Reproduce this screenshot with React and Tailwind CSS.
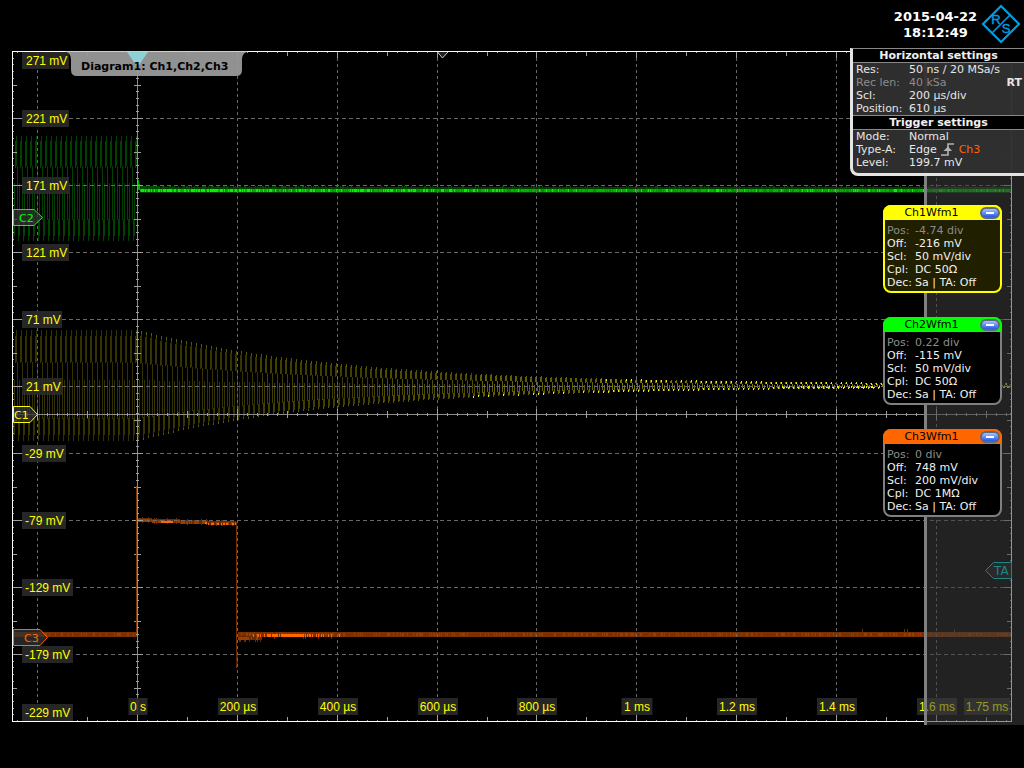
import React from "react";

/* ---------- waveform data ---------- */

const noise = (n) => {
  const v = Math.sin(n * 127.1 + 11.7) * 43758.5453;
  return v - Math.floor(v);
};

const col = (x, top, bottom) =>
  `M${x} ${top.toFixed(1)}h1V${bottom.toFixed(1)}h-1z`;

// Vertical extent of each of the five pixel columns in one carrier period.
const EXTENTS = [
  [0.9, 0.4],
  [1, 0.42],
  [0.42, -0.6],
  [-0.58, -1],
  [0.1, -0.9],
];

function carrier(from, to, mid, amp) {
  let d = "";
  for (let x = from; x < to; x++) {
    const [hi, lo] = EXTENTS[x % 5];
    const a = amp(x);
    d += col(x, mid - hi * a, Math.max(mid - lo * a, mid - hi * a + 1));
  }
  return d;
}

const decay = (x) => (x < 138 ? 55.5 : 54 * Math.exp(-(x - 138) / 205) + 1.5);

const ch1Segments = [
  [13, 138, "#343200"],
  [138, 260, "#363400"],
  [260, 380, "#423f00"],
  [380, 480, "#504c00"],
  [480, 600, "#645f00"],
  [600, 740, "#7a7500"],
  [740, 1011, "#858000"],
].map(([a, b, color]) => ({ color, d: carrier(a, b, 385.5, decay) }));

const ch1Tips = (() => {
  let dim = "";
  let bright = "";
  for (let x = 140; x < 1011; x++) {
    const a = decay(x);
    const k = x % 5;
    if (x < 470) {
      if (k === 1) dim += col(x, 385.5 - a, 388.5 - a);
      if (k === 3) dim += col(x, 383.5 + a, 385.5 + a);
    } else {
      const chance = (x - 440) / 330;
      if (k === 3 && noise(x) < chance + 0.2) bright += col(x, 383.5 + a, 385.5 + a);
      if (x > 600 && k === 1 && noise(x) < chance) bright += col(x, 385.5 - a, 387.5 - a);
      if (x > 780 && k !== 0 && noise(x * 3) < 0.6) bright += col(x, 386, 388);
    }
  }
  return { dim, bright };
})();

const ch2Burst = carrier(13, 137, 188.5, () => 52.5);

const ch2Trace = (() => {
  let shadow = "";
  let mid = "";
  let bright = "";
  for (let x = 140; x < 1011; x++) {
    if (noise(x) < (x < 160 ? 0.9 : x < 330 ? 0.4 : 0.15)) shadow += col(x, 186, 189);
    const p = x < 260 ? 0.65 : x < 500 ? 0.4 : 0.12;
    if (noise(x * 2) < p) bright += col(x, 189, 192);
    else if (noise(x * 5) < 0.6) mid += col(x, 189, 192);
  }
  return { shadow, mid, bright };
})();

const ch3Trace = (() => {
  let dark = "";
  let mid = "";
  let bright = "";
  for (let x = 138; x < 237; x++) {
    const y = 518 + Math.round((x - 138) / 28);
    dark += col(x, y, y + 4);
    if (x < 150 || noise(x) < 0.7) mid += col(x, y + 1, y + 4);
    if ((x > 160 && x < 173) || (x > 204 && noise(x) < 0.5)) bright += col(x, y + 2, y + 4);
    if (noise(x * 7) < 0.15) dark += col(x, y - 1, y + 5);
  }
  for (let x = 238; x < 262; x++) {
    dark += col(x, 635, noise(x) < 0.4 ? 642 : 640);
    if (noise(x * 2) < (x < 248 ? 1 : 0.4)) mid += col(x, 637, 640);
  }
  for (let x = 250; x < 340; x++) {
    if (noise(x * 3) < (x > 266 && x < 306 ? 0.95 : 0.4)) bright += col(x, 634, 637);
    if (noise(x * 11) < 0.15) dark += col(x, 632, 639);
  }
  for (let x = 14; x < 1011; x++) {
    if (x > 136 && x < 238) continue;
    if (noise(x * 13) < 0.35) mid += col(x, 633, 636);
  }
  [862, 904, 907, 954].forEach((x) => (dark += col(x, 629, 633)));
  return { dark, mid, bright };
})();

/* ---------- grid ---------- */

const GRID_X = [37, 137, 237, 337, 437, 536, 636, 736, 836, 936];
const GRID_Y = [118, 185, 252, 319, 386, 453, 520, 587, 654];

const hTicks = (() => {
  let d = "";
  for (let i = 0; i < 100; i++) {
    const x = Math.round(17 + i * 9.99) + 0.5;
    const n = i - 2;
    const size = n % 10 === 0 ? 6 : n % 5 === 0 ? 4 : 1;
    const half = n % 10 === 0 ? 5 : n % 5 === 0 ? 3 : 1;
    d += `M${x} ${721 - size}V721M${x} 52V${52 + size}M${x} ${414 - half}V${415 + half}`;
  }
  return d;
})();

const vTicks = (() => {
  let d = "";
  for (let i = -9; i < 90; i++) {
    const y = Math.round(118 + i * 6.7) + 0.5;
    if (y < 53 || y > 720) continue;
    const size = i % 10 === 0 ? 9 : i % 5 === 0 ? 4 : 1;
    const half = i % 10 === 0 ? 5 : i % 5 === 0 ? 3 : 1;
    d += `M13 ${y}H${13 + size}M1011 ${y}H${1011 - Math.min(size, 7)}M${137 - half} ${y}H${138 + half}`;
  }
  return d;
})();

const Y_LABELS = [
  ["271 mV", 52, 47],
  ["221 mV", 110, 47],
  ["171 mV", 177, 47],
  ["121 mV", 244, 47],
  ["71 mV", 311, 40],
  ["21 mV", 378, 40],
  ["-29 mV", 445, 44],
  ["-79 mV", 512, 44],
  ["-129 mV", 579, 51],
  ["-179 mV", 646, 51],
  ["-229 mV", 704, 51],
];

const X_LABELS = [
  ["0 s", 138, 19],
  ["200 µs", 238, 40],
  ["400 µs", 338, 40],
  ["600 µs", 438, 40],
  ["800 µs", 537, 40],
  ["1 ms", 637, 31],
  ["1.2 ms", 737, 40],
  ["1.4 ms", 837, 40],
  ["1.6 ms", 937, 40],
  ["1.75 ms", 987, 46],
];

function Tag({ label, y, body, tip, textX, color }) {
  const points = `13.5,${y - 8} ${body},${y - 8} ${tip},${y} ${body},${y + 8} 13.5,${y + 8}`;
  return (
    <g>
      <polygon points={points} fill="#333333" fillOpacity="0.75" stroke={color} />
      <text x={textX} y={y + 4} fontSize="11" fill={color} className="font-['DejaVu_Sans',sans-serif]">
        {label}
      </text>
    </g>
  );
}

function Plot() {
  return (
    <svg
      viewBox="0 48 1024 677"
      className="block h-auto w-full font-['Liberation_Sans',Arial,sans-serif]"
      role="img"
      aria-label="Oscilloscope diagram"
    >
      <g shapeRendering="crispEdges">
        <path d={ch2Burst} fill="#004200" />
        {ch1Segments.map((s) => (
          <path key={s.color} d={s.d} fill={s.color} />
        ))}
        <path d={ch1Tips.dim} fill="#5c5800" />
        <path d={ch1Tips.bright} fill="#eeee00" />

        <path d="M137 180h2v4h1v3h1v3h-4z" fill="#00b000" />
        <rect x="140" y="187" width="871" height="6" fill="#003c00" />
        <rect x="140" y="189" width="871" height="3" fill="#009600" />
        <path d={ch2Trace.shadow} fill="#004a00" />
        <path d={ch2Trace.mid} fill="#00b400" />
        <path d={ch2Trace.bright} fill="#00f400" />

        <rect x="13" y="632" width="124" height="5" fill="#7a3000" />
        <rect x="238" y="632" width="773" height="5" fill="#7a3000" />
        <path d={ch3Trace.dark} fill="#6a2a00" />
        <path d={ch3Trace.mid} fill="#9a3e00" />
        <path d={ch3Trace.bright} fill="#ff6600" />
        <rect x="236" y="522" width="1" height="146" fill="#7a3000" />
        <rect x="236" y="652" width="2" height="14" fill="#5a2400" />
      </g>

      <g shapeRendering="crispEdges" fill="none">
        {GRID_X.filter((x) => x !== 137).map((x) => (
          <path key={x} d={`M${x + 0.5} 52V721`} stroke="#686868" strokeDasharray="3 3" />
        ))}
        {GRID_Y.map((y) => (
          <path key={y} d={`M13 ${y + 0.5}H1011`} stroke="#686868" strokeDasharray="4 3" />
        ))}
        <path d="M137.5 52V721M13 414.5H1011" stroke="#8c8c8c" />
        <path d={hTicks} stroke="#a0a0a0" />
        <path d={vTicks} stroke="#a0a0a0" />
        <path d="M136.5 486V634" stroke="#803400" />
        <path d="M12.5 51.5H1011.5V721.5H12.5Z" stroke="#ffffff" />
      </g>

      <path d="M437.5 52L442.5 58L448 52" fill="#555555" fillOpacity="0.4" stroke="#cccccc" />

      <g fontSize="12">
        {Y_LABELS.map(([text, y, w]) => (
          <g key={text}>
            <rect x="22" y={y} width={w} height="17" fill="#2a2a2a" fillOpacity="0.9" />
            <text x={text[0] === "-" ? 25 : 26} y={y + 13} fill="#ffff00">
              {text}
            </text>
          </g>
        ))}
        {X_LABELS.map(([text, x, w]) => (
          <g key={text}>
            <rect x={x - w / 2} y="698" width={w} height="17" fill="#2a2a2a" fillOpacity="0.9" />
            <text x={x} y="711" textAnchor="middle" fill="#ffff00">
              {text}
            </text>
          </g>
        ))}
      </g>

      <Tag label="C2" y={217.5} body={34} tip={42.5} textX={19} color="#00ff00" />
      <Tag label="C1" y={414.5} body={30} tip={37.5} textX={14} color="#ffff00" />
      <Tag label="C3" y={637.5} body={40} tip={47.5} textX={24} color="#ff6600" />

      <path
        d="M64 51.5C69 52 71 55 71 60V70Q71 76 77 76H236Q242 76 242 70V60C242 55 244 52 250 51.5Z"
        fill="#999999"
        fillOpacity="0.95"
      />
      <path d="M127 52H148L139 65H136Z" fill="#8fd0d4" />
      <text x="81" y="70" fontSize="11" fontWeight="bold" fill="#000000" className="font-['DejaVu_Sans',sans-serif]">
        Diagram1: Ch1,Ch2,Ch3
      </text>

      <rect x="927" y="48" width="97" height="677" fill="#3e3e3e" fillOpacity="0.55" />
      <rect x="924" y="48" width="3" height="677" fill="#808080" />
      <path d="M1011.5 562.5H993.5L985.5 570.5L993.5 578.5H1011.5Z" fill="#2a2a2a" stroke="#1f8484" />
      <text x="994" y="575" fontSize="12" fill="#1f8484" className="font-['DejaVu_Sans',sans-serif]">
        TA
      </text>
    </svg>
  );
}

function Logo() {
  return (
    <svg viewBox="0 0 40 40" className="size-10 shrink-0" role="img" aria-label="R&S">
      <g fill="none" stroke="#009ee3" strokeWidth="2.2">
        <path d="M20 2L38 20L20 38L2 20Z" />
        <path d="M10.5 29.5L29.5 10.5" strokeWidth="1.6" />
      </g>
      <g fill="#009ee3" fontSize="13" textAnchor="middle" className="font-['Liberation_Sans',Arial,sans-serif]">
        <text x="15" y="20" stroke="#009ee3" strokeWidth="0.4">R</text>
        <text x="25" y="29" stroke="#009ee3" strokeWidth="0.4">S</text>
      </g>
    </svg>
  );
}

function EdgeIcon() {
  return (
    <svg viewBox="0 0 14 13" className="h-[13px] w-[14px]" aria-label="rising edge">
      <path d="M0 12H7V1H13" fill="none" stroke="#b4b4b4" strokeWidth="1.6" />
      <path d="M2.5 8L7 3.5L11 8Z" fill="#b4b4b4" />
    </svg>
  );
}

function Heading({ children }) {
  return (
    <h2 className="h-[14px] border-b border-[#888888] bg-black text-center text-[11px] leading-[14px] font-bold text-[#f0f0f0]">
      {children}
    </h2>
  );
}

function Rows({ rows, className }) {
  return (
    <dl className={className}>
      {rows.map(([k, v, dim]) => (
        <React.Fragment key={k}>
          <dt className={dim ? "text-[#8c8c8c]" : undefined}>{k}</dt>
          <dd className={dim ? "text-[#8c8c8c]" : undefined}>{v}</dd>
        </React.Fragment>
      ))}
    </dl>
  );
}

const SETTINGS_GRID =
  "grid grid-cols-[53px_1fr] pl-[3px] text-[11px] leading-[13px] whitespace-nowrap text-[#e6e6e6]";

function SettingsPanel() {
  return (
    <section className="absolute top-12 right-0 w-[174px] overflow-hidden rounded-bl-lg border-t border-b-3 border-l-3 border-t-[#888888] border-b-[#e4e4e4] border-l-[#e4e4e4] bg-[#303030]/95 pb-1">
      <Heading>Horizontal settings</Heading>
      <div className="relative border-b border-[#888888]">
        <Rows
          className={SETTINGS_GRID}
          rows={[
            ["Res:", "50 ns / 20 MSa/s"],
            ["Rec len:", "40 kSa", true],
            ["Scl:", "200 µs/div"],
            ["Position:", "610 µs"],
          ]}
        />
        <span className="absolute top-[13px] right-[2px] text-[11px] leading-[13px] font-bold text-[#e6e6e6]">RT</span>
      </div>
      <Heading>Trigger settings</Heading>
      <Rows
        className={SETTINGS_GRID}
        rows={[
          ["Mode:", "Normal"],
          [
            "Type-A:",
            <span className="flex items-center gap-1">
              Edge <EdgeIcon /> <span className="text-[#ff6600]">Ch3</span>
            </span>,
          ],
          ["Level:", "199.7 mV"],
        ]}
      />
    </section>
  );
}

const CHANNELS = [
  {
    name: "Ch1Wfm1",
    box: "border-[#ffff00] bg-[#201f00]",
    title: "bg-[#ffff00]",
    values: ["-4.74 div", "-216 mV", "50 mV/div", "DC 50Ω"],
  },
  {
    name: "Ch2Wfm1",
    box: "border-[#808080] bg-black",
    title: "bg-[#00ff00]",
    values: ["0.22 div", "-115 mV", "50 mV/div", "DC 50Ω"],
  },
  {
    name: "Ch3Wfm1",
    box: "border-[#808080] bg-black",
    title: "bg-[#ff6600]",
    values: ["0 div", "748 mV", "200 mV/div", "DC 1MΩ"],
  },
];

function ChannelCard({ channel }) {
  const [pos, off, scl, cpl] = channel.values;
  return (
    <article className={`w-[119px] rounded-lg border-2 pb-[2px] ${channel.box}`}>
      <header className={`-mx-[2px] -mt-[2px] flex h-[15px] items-center justify-end rounded-t-lg pr-[2px] ${channel.title}`}>
        <h3 className="flex-1 text-center text-[11px] leading-[15px] text-black">{channel.name}</h3>
        <button
          type="button"
          aria-label={`Minimize ${channel.name}`}
          className="flex h-3 w-5 items-center justify-center rounded-md border-2 border-[#5c6a80] bg-linear-to-b from-[#a8c0ff] to-[#2858e0]"
        >
          <span className="mt-px h-[2px] w-2 bg-white" />
        </button>
      </header>
      <Rows
        className="grid grid-cols-[28px_1fr] pt-1 pl-[2px] text-[11px] leading-[13px] whitespace-nowrap text-[#f0f0f0]"
        rows={[
          ["Pos:", pos, true],
          ["Off:", off],
          ["Scl:", scl],
          ["Cpl:", cpl],
          ["Dec:", "Sa | TA: Off"],
        ]}
      />
    </article>
  );
}

export default function App() {
  return (
    <main className="relative min-h-screen w-full overflow-hidden bg-black font-['DejaVu_Sans',Verdana,sans-serif]">
      <header className="flex h-12 items-start justify-end gap-1 pt-1 pr-[3px]">
        <time dateTime="2015-04-22T18:12:49" className="pt-[5px] text-center text-[13px] leading-4 font-bold text-white">
          2015-04-22
          <br />
          18:12:49
        </time>
        <Logo />
      </header>
      <Plot />
      <SettingsPanel />
      <aside className="absolute top-[205px] right-[22px] flex flex-col gap-6">
        {CHANNELS.map((c) => (
          <ChannelCard key={c.name} channel={c} />
        ))}
      </aside>
    </main>
  );
}
